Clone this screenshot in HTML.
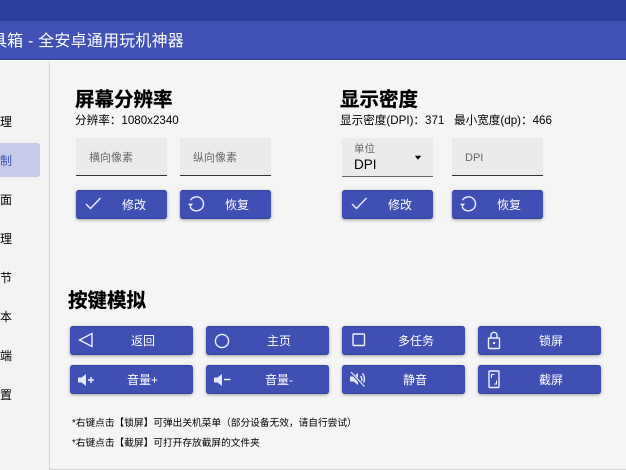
<!DOCTYPE html>
<html lang="zh"><head><meta charset="utf-8"><style>
html,body{margin:0;padding:0}
body{width:626px;height:470px;overflow:hidden;position:relative;background:#f5f5f5;font-family:"Liberation Sans","Noto Sans CJK SC",sans-serif;color:#000}
div,svg{position:absolute}
.t{white-space:nowrap;line-height:16px}
.h{font-size:19.5px;font-weight:700;line-height:26px;white-space:nowrap;-webkit-text-stroke:.3px #000}
.s{font-size:11.6px;line-height:16px;white-space:nowrap}
.n{font-size:12px;line-height:16px;white-space:nowrap;right:614px}
.inp{width:91px;height:37px;top:138px;background:#ebebeb;border-bottom:1px solid #333}
.ph{font-size:11px;line-height:16px;color:#666;top:12px;left:13px;white-space:nowrap}
.b{height:29px;background:#3f4fb3;border-radius:3px;box-shadow:inset 0 1px 0 #3243a8,inset 0 -1px 0 #3243a8,0 1px 3px rgba(0,0,0,.35);color:#fff;font-size:12px;line-height:31px;text-align:center;white-space:nowrap}
.b1{width:91px;top:190px}
.k{width:123px}
.b svg{fill:none;stroke:#eef0fa;stroke-width:1.4}
.b span{position:absolute;top:0}
.note{font-size:9.7px;line-height:14px;white-space:nowrap;left:72px}
</style></head><body>
<div style="left:0;top:0;width:626px;height:21px;background:#303f9f"></div>
<div style="left:0;top:21px;width:626px;height:38px;background:#3f51b5"></div>
<div style="left:0;top:59px;width:626px;height:1px;background:#2c3ca8"></div>
<div style="left:0;top:60px;width:626px;height:1px;background:#fff"></div>
<div class="t" style="right:442px;top:34px;font-size:16px;color:#fff;letter-spacing:.2px">工具箱 - 全安卓通用玩机神器</div>

<div style="left:0;top:61px;width:49px;height:409px;background:#f3f3f3"></div>
<div style="left:49px;top:61px;width:1px;height:409px;background:#d4d4d4"></div>
<div style="left:50px;top:469px;width:576px;height:1px;background:#d0d0d0"></div>
<div style="left:-8px;top:143px;width:48px;height:34px;background:#c5cae9;border-radius:3px"></div>

<div class="n" style="top:114px">管理</div>
<div class="n" style="top:153px;color:#3f51b5">控制</div>
<div class="n" style="top:192px">界面</div>
<div class="n" style="top:231px">管理</div>
<div class="n" style="top:270px">调节</div>
<div class="n" style="top:309px">脚本</div>
<div class="n" style="top:348px">终端</div>
<div class="n" style="top:387px">设置</div>

<div class="h" style="left:75px;top:87px">屏幕分辨率</div>
<div class="s" style="left:75px;top:113px">分辨率：1080x2340</div>
<div class="h" style="left:340px;top:87px">显示密度</div>
<div class="s" style="left:340px;top:113px">显示密度(DPI)：371&nbsp;&nbsp;&nbsp;最小宽度(dp)：466</div>

<div class="inp" style="left:76px"><div class="ph">横向像素</div></div>
<div class="inp" style="left:180px"><div class="ph">纵向像素</div></div>
<div class="inp" style="left:342px;height:38px;border-bottom-color:#666">
  <div class="ph" style="top:3px;left:12px;font-size:10.5px">单位</div>
  <div class="t" style="left:12px;top:19px;font-size:13.5px">DPI</div>
  <svg style="left:72px;top:17px" width="8" height="6"><path d="M.8.8h6.4L4 4.8z" fill="#000"/></svg>
</div>
<div class="inp" style="left:452px"><div class="ph">DPI</div></div>

<div class="b b1" style="left:76px"><svg style="left:9px;top:6px" width="17" height="15"><path d="M1 8l4.500 4.500L15.500 2"/></svg><span style="left:46px">修改</span></div>
<div class="b b1" style="left:180px"><svg style="left:7px;top:6px" width="18" height="17"><path d="M3.500 4.200A7 7 0 1 1 3.200 11"/><path d="M1 7.600h5L3.500 11z" fill="#eef0fa" stroke="none"/></svg><span style="left:45px">恢复</span></div>
<div class="b b1" style="left:342px"><svg style="left:9px;top:6px" width="17" height="15"><path d="M1 8l4.500 4.500L15.500 2"/></svg><span style="left:46px">修改</span></div>
<div class="b b1" style="left:452px"><svg style="left:7px;top:6px" width="18" height="17"><path d="M3.500 4.200A7 7 0 1 1 3.200 11"/><path d="M1 7.600h5L3.500 11z" fill="#eef0fa" stroke="none"/></svg><span style="left:45px">恢复</span></div>

<div class="h" style="left:68px;top:288px">按键模拟</div>

<div class="b k" style="left:70px;top:326px"><svg style="left:8px;top:6px" width="16" height="17"><path d="M1.500 8L14 1.500v13z"/></svg><span style="left:61px">返回</span></div>
<div class="b k" style="left:206px;top:326px"><svg style="left:8px;top:7px" width="16" height="16"><circle cx="8" cy="8" r="6.600"/></svg><span style="left:61px">主页</span></div>
<div class="b k" style="left:342px;top:326px"><svg style="left:10px;top:7px" width="14" height="14"><rect x="1" y="1" width="11.500" height="11.500" rx="1"/></svg><span style="left:56px">多任务</span></div>
<div class="b k" style="left:478px;top:326px"><svg style="left:9px;top:5px" width="15" height="19"><rect x="1.500" y="7" width="11" height="10.500" rx="1"/><path d="M4 7V4.300a3 3 0 0 1 6 0V7"/><circle cx="7" cy="12" r="1.200" fill="#eef0fa" stroke="none"/></svg><span style="left:61px">锁屏</span></div>

<div class="b k" style="left:70px;top:365px"><svg style="left:8px;top:8px" width="18" height="14"><path d="M0 4.500h3.500L8 1v12L3.500 9.500H0z" fill="#e4e7f5" stroke="none"/><path d="M10 7h6M13 4v6"/></svg><span style="left:57px">音量+</span></div>
<div class="b k" style="left:206px;top:365px"><svg style="left:8px;top:8px" width="18" height="14"><path d="M0 4.500h3.500L8 1v12L3.500 9.500H0z" fill="#e4e7f5" stroke="none"/><path d="M10 6.500h6.500"/></svg><span style="left:59px">音量-</span></div>
<div class="b k" style="left:342px;top:365px"><svg style="left:7px;top:6px" width="18" height="17"><path d="M1 5.500h3.500L9 2v12L4.500 10.500H1z" fill="#e4e7f5" stroke="none"/><path d="M2 1.500l13 14" stroke="#3f4fb3" stroke-width="2.500"/><path d="M2 1l13.500 14.500" stroke-width="1.100"/><path d="M11.500 5a5 5 0 0 1 1 5M13.500 2.500a8 8 0 0 1 1 9"/></svg><span style="left:61px">静音</span></div>
<div class="b k" style="left:478px;top:365px"><svg style="left:10px;top:5px" width="14" height="19"><rect x="1" y="1" width="10" height="16.500" rx="1"/><path d="M3.500 8V4.500H6.500M8.500 10.500V14H6" stroke-width="1"/></svg><span style="left:61px">截屏</span></div>

<div class="note" style="top:417px">*右键点击【锁屏】可弹出关机菜单（部分设备无效，请自行尝试）</div>
<div class="note" style="top:437px">*右键点击【截屏】可打开存放截屏的文件夹</div>
</body></html>
